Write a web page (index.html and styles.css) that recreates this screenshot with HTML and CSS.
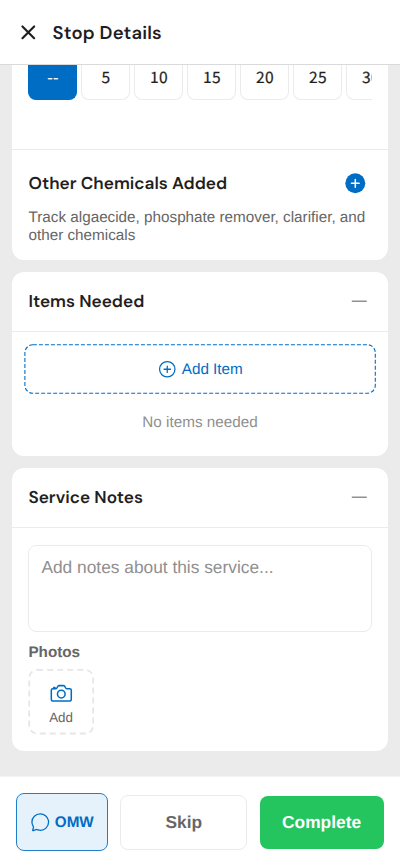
FILE: index.html
```html
<!DOCTYPE html>
<html lang="en">
<head>
<meta charset="utf-8">
<title>Stop Details</title>
<link rel="stylesheet" href="styles.css">
</head>
<body>
<div class="screen">
  <header class="topbar">
    <svg class="icon close" viewBox="0 0 24 24"><path d="M6.3 6.3 17.7 17.7M17.7 6.3 6.3 17.7"/></svg>
    <h1>Stop Details</h1>
  </header>
  <main class="content">
    <section class="card card-readings">
      <div class="chips">
        <span class="chip selected">--</span><span class="chip">5</span><span class="chip">10</span><span class="chip">15</span><span class="chip">20</span><span class="chip">25</span><span class="chip">30</span>
      </div>
      <div class="chemicals">
        <div class="chemicals-head">
          <h2>Other Chemicals Added</h2>
          <svg class="icon add-solid" viewBox="0 0 512 512"><circle cx="256" cy="256" r="208"/><path d="M256 176v160M336 256H176"/></svg>
        </div>
        <p>Track algaecide, phosphate remover, clarifier, and other chemicals</p>
      </div>
    </section>
    <section class="card card-items">
      <div class="card-head">
        <h2>Items Needed</h2>
        <svg class="icon minus" viewBox="0 0 512 512"><path d="M400 256H112"/></svg>
      </div>
      <button class="add-item">
        <svg class="outline dashed-frame"><rect x=".9" y=".75" width="350.4" height="48.5" rx="8"/></svg>
        <svg class="icon small outline" viewBox="0 0 512 512"><circle cx="256" cy="256" r="192"/><path d="M256 176v160M336 256H176"/></svg>
        <span>Add Item</span>
      </button>
      <p class="empty">No items needed</p>
    </section>
    <section class="card card-notes">
      <div class="card-head">
        <h2>Service Notes</h2>
        <svg class="icon minus" viewBox="0 0 512 512"><path d="M400 256H112"/></svg>
      </div>
      <div class="notes">Add notes about this service...</div>
      <h3>Photos</h3>
      <button class="photo">
        <svg class="dashed-frame"><rect x="1.2" y=".9" width="64" height="63.6" rx="8"/></svg>
        <svg class="icon outline" viewBox="0 0 512 512"><path d="m350.54 148.68-26.62-42.06C318.31 100.08 310.62 96 302 96h-92c-8.62 0-16.31 4.08-21.92 10.62l-26.62 42.06C155.85 155.23 148.62 160 140 160H80a32 32 0 0 0-32 32v192a32 32 0 0 0 32 32h352a32 32 0 0 0 32-32V192a32 32 0 0 0-32-32h-59c-8.65 0-16.85-4.77-22.46-11.32z"/><circle cx="256" cy="272" r="80"/><path d="M124 158v-22h-24v22"/></svg>
        <span>Add</span>
      </button>
    </section>
  </main>
  <footer class="actions">
    <button class="omw">
      <svg class="icon small outline" viewBox="0 0 512 512"><path d="M87.49 380c1.19-4.38-1.44-10.47-3.95-14.86a44.86 44.86 0 0 0-2.54-3.8 199.81 199.81 0 0 1-33-110C47.65 139.09 140.73 48 255.83 48 356.21 48 440 117.54 459.58 209.85a199 199 0 0 1 4.42 41.64c0 112.41-89.49 204.93-204.59 204.93-18.3 0-43-4.6-56.47-8.37s-26.92-8.77-30.39-10.11a31.09 31.09 0 0 0-11.12-2.07 30.71 30.71 0 0 0-12.09 2.43l-67.83 24.48a16 16 0 0 1-4.67 1.22 9.6 9.6 0 0 1-9.57-9.74 15.85 15.85 0 0 1 .6-3.29z"/></svg>
      <span>OMW</span>
    </button>
    <button class="skip">Skip</button>
    <button class="complete">Complete</button>
  </footer>
</div>
</body>
</html>
```
FILE: styles.css
```css
* { box-sizing: border-box; }
body { margin: 0; font-family: "Liberation Sans", Arial, sans-serif; color: #1f1f1f; text-rendering: geometricPrecision; }
h1, h2, h3, p { margin: 0; }
button { font-family: inherit; text-rendering: inherit; margin: 0; padding: 0; border: 0; background: none; }
.screen { width: 400px; height: 867px; display: flex; flex-direction: column; overflow: hidden; background: #ebebeb; }

.icon { width: 24.6px; height: 24.6px; flex: none; fill: none; stroke-width: 32; stroke-linecap: round; stroke-linejoin: round; }
.small { width: 20.5px; height: 20.5px; }
.outline { stroke: #006dc4; }
.minus { stroke: #8f8f8f; }
.close { stroke: #1f1f1f; stroke-width: 2.1; }
.add-solid circle { fill: #006dc4; }
.add-solid path { stroke: #fff; }

.topbar { height: 65px; flex: none; display: flex; align-items: center; gap: 12px; padding: 0 16px; background: #fff; border-bottom: 1px solid #dadada; }
h1, h2 { font-family: "DM Sans", "Open Sans", sans-serif; font-weight: 600; white-space: nowrap; }
h1 { margin-top: 1px; font-size: 18.46px; line-height: 24px; letter-spacing: .17px; }
h2 { font-size: 17.2px; line-height: 24px; }

.content { flex: 1; min-height: 0; display: flex; flex-direction: column; gap: 12px; padding: 0 12px; }
.card { flex: none; background: #fff; border-radius: 12px; overflow: hidden; }
.card-readings { height: 194.5px; margin-bottom: .5px; border-radius: 0 0 12px 12px; }
.chips { display: flex; gap: 4px; height: 84px; margin: 0 16px; padding-left: .4px; overflow: hidden; }
.chip { flex: none; width: 49px; height: 34.7px; border: 1px solid #ebebeb; border-top: 0; border-radius: 0 0 8px 8px; text-align: center; font: 400 15.6px/25px "Noto Sans CJK SC", sans-serif; letter-spacing: .2px; -webkit-text-stroke: .2px; }
.selected { background: #006dc4; border-color: #006dc4; color: #fff; }
.chemicals { border-top: 1px solid #ebebeb; padding: 22px 20.5px 0 16.5px; }
.chemicals-head { display: flex; justify-content: space-between; align-items: center; height: 24px; }
.chemicals-head .icon { margin-top: -1px; }
.chemicals p { margin: 13px -5px 0 0; font-size: 15.25px; line-height: 17.5px; color: #666; }

.card-head { height: 60px; display: flex; align-items: center; justify-content: space-between; padding: 0 16.4px; border-bottom: 1px solid #ebebeb; }
.card-head h2 { margin-top: 1px; }
.card-items { height: 184px; }
.add-item { position: relative; display: flex; align-items: center; justify-content: center; gap: 4px; width: 352px; height: 50px; margin: 12px 12px 0; color: #006dc4; font-size: 15.25px; }
.dashed-frame { position: absolute; inset: 0; width: 100%; height: 100%; fill: none; }
.add-item .dashed-frame { stroke-width: 1.1; stroke-dasharray: 4 2; }
.empty { margin-top: 20px; text-align: center; font-size: 15.25px; line-height: 18px; color: #8f8f8f; }

.card-notes { height: 283px; }
.notes { height: 87.4px; margin: 16.5px 16.4px 0; padding: 11px 12px; border: 1px solid #ebebeb; border-radius: 8px; font-size: 17.33px; line-height: 20px; color: #8f8f8f; }
h3 { margin: 12px 16.4px 0; font-size: 15.25px; line-height: 18px; color: #666; }
.photo { position: relative; display: flex; flex-direction: column; align-items: center; width: 66px; height: 66px; margin: 7.5px 16px 0; padding-top: 12px; color: #666; font-size: 13.33px; line-height: 15px; }
.photo span { margin-top: 4px; }
.photo .dashed-frame { stroke: #e6e6e6; stroke-width: 1.8; stroke-dasharray: 6 4; }

.actions { height: 91px; flex: none; display: flex; align-items: center; gap: 12.3px; padding: 0 16px; background: #fff; border-top: 1px solid #f3f3f3; font-weight: 700; }
.actions button { display: flex; align-items: center; justify-content: center; border-radius: 8px; font-weight: 700; font-size: 17.33px; }
.actions .omw { width: 92px; height: 58px; gap: 4px; border: 1px solid #207fca; background: #e6f2fb; color: #006dc4; font-size: 15.25px; }
.actions .skip { width: 127px; height: 55px; border: 1px solid #ebebeb; color: #666; }
.actions .complete { width: 124px; height: 53px; background: #24c45e; color: #fff; }
```
